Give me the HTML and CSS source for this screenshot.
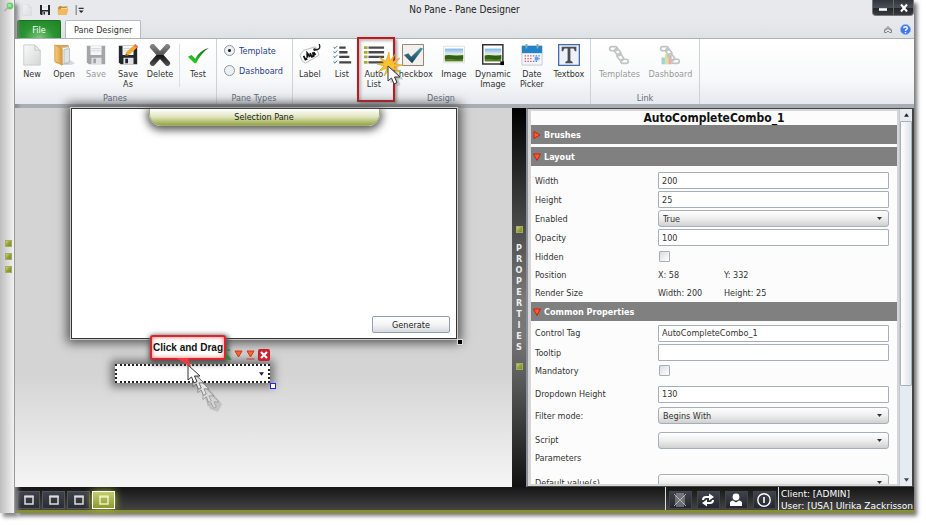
FILE: index.html
```html
<!DOCTYPE html>
<html lang="en">
<head>
<meta charset="utf-8">
<title>No Pane - Pane Designer</title>
<link rel="stylesheet" href="styles.css">
</head>
<body>
<svg class="defs" aria-hidden="true">
  <defs>
    <linearGradient id="gPaper" x1="0" y1="0" x2="1" y2="1"><stop offset="0" stop-color="#fafafa"/><stop offset="1" stop-color="#d4d6d6"/></linearGradient>
    <linearGradient id="gSky" x1="0" y1="0" x2="0" y2="1"><stop offset="0" stop-color="#7fb6e8"/><stop offset=".45" stop-color="#e8f2ee"/><stop offset=".55" stop-color="#87a93c"/><stop offset="1" stop-color="#4e7a1c"/></linearGradient>
    <linearGradient id="gX" gradientUnits="userSpaceOnUse" x1="0" y1="0" x2="0" y2="24"><stop offset="0" stop-color="#8a8a8a"/><stop offset=".48" stop-color="#555"/><stop offset=".5" stop-color="#111"/><stop offset="1" stop-color="#555"/></linearGradient>
    <linearGradient id="gFold" x1="0" y1="0" x2="1" y2="0"><stop offset="0" stop-color="#f6cf82"/><stop offset="1" stop-color="#d9993a"/></linearGradient>
    <linearGradient id="gTick" x1="0" y1="1" x2="1" y2="0"><stop offset="0" stop-color="#2fe02a"/><stop offset="1" stop-color="#0a5a12"/></linearGradient>
    <linearGradient id="gTeal" x1="0" y1="0" x2="0" y2="1"><stop offset="0" stop-color="#4a95a5"/><stop offset="1" stop-color="#153f52"/></linearGradient>
    <symbol id="page" viewBox="0 0 22 24"><path d="M2 1h12l6 6v16H2z" fill="url(#gPaper)" stroke="#c9cccd"/><path d="M14 1v6h6z" fill="#e4e6e6" stroke="#c9cccd"/></symbol>
    <symbol id="floppy" viewBox="0 0 24 24"><path d="M2 2h20v20H4l-2-2z" fill="currentColor"/><path d="M6 2h12v10H6z" fill="#f4f6f8"/><path d="M7 5h10M7 7.500h10" stroke="#cdd3d8"/><path d="M7 15h11v7H7z" fill="#dfe2e5"/><path d="M9 16h3v5H9z" fill="currentColor"/></symbol>
    <symbol id="chain" viewBox="0 0 26 24"><g fill="none" stroke="#c2c4c4" stroke-width="2"><rect x="2" y="2" width="9" height="5" rx="2.500"/><rect x="7" y="6" width="9" height="5" rx="2.500" transform="rotate(55 11.500 8.500)"/><rect x="10" y="12" width="9" height="5" rx="2.500" transform="rotate(50 14.500 14.500)"/><rect x="15" y="17" width="9" height="5" rx="2.500"/></g></symbol>
    <symbol id="window" viewBox="0 0 10 10"><path d="M1 1.500h8v7.500H1z" fill="none" stroke="currentColor" stroke-width="1.500"/><path d="M.3 1.500h9.400" stroke="currentColor" stroke-width="2"/></symbol>
    <symbol id="arrow" viewBox="0 0 14 20"><path d="M1 1v15l3.500-3 2.500 6 3-1.500-2.500-5.500H13z" stroke-linejoin="round"/></symbol>
  </defs>
</svg>
<div class="app">
  <aside class="side">
    <svg class="pin" viewBox="0 0 10 10"><circle cx="6" cy="4" r="3.400" fill="#6fc96a"/><circle cx="5.500" cy="3.500" r="1.800" fill="#a4e39c"/><path d="M.5 9l3.500-3.500" stroke="#a9a9a9" stroke-width="1.500"/></svg>
    <i class="dot"></i><i class="dot"></i><i class="dot"></i>
  </aside>
  <main class="window">
    <header class="title-bar">
      <div class="quick">
        <svg class="q-icon faint" viewBox="0 0 22 24"><use href="#page"/></svg>
        <svg class="q-icon dark" viewBox="0 0 24 24"><use href="#floppy"/></svg>
        <svg class="q-icon" viewBox="0 0 22 22"><path d="M2 20V6l4-3 4 2 9-1v8z" fill="#c98a2b"/><path d="M7 8h9l2-2v8H7z" fill="#f7f1e2"/><path d="M1 11l5-2h15l-3 11H2z" fill="#f2b95a"/></svg>
        <svg class="q-menu" viewBox="0 0 10 12"><path d="M1 0v12" stroke="#555"/><path d="M4 4h6" stroke="#222" stroke-width="1.400"/><path d="M4 6.500h6l-3 3z" fill="#222"/></svg>
      </div>
      <h1>No Pane - Pane Designer</h1>
      <div class="win-buttons">
        <button type="button" aria-label="Minimize"><svg viewBox="0 0 10 10"><path d="M1 6.500h8" stroke="#fff" stroke-width="2.600"/></svg></button>
        <button type="button" aria-label="Close"><svg viewBox="0 0 10 10"><path d="M2 1.500l6 7M8 1.500l-6 7" stroke="#fff" stroke-width="2"/></svg></button>
      </div>
    </header>
    <nav class="tabs">
      <button type="button" class="tab file">File</button>
      <button type="button" class="tab current">Pane Designer</button>
      <span class="tab-tools">
        <svg class="tool" viewBox="0 0 10 10"><path d="M1.500 6L5 2.500 8.500 6v2.500H6.500L5 7 3.500 8.500h-2zM1.500 6.500L5 4.500l3.500 2" fill="none" stroke="#777" stroke-width=".9"/></svg>
        <svg class="tool help" viewBox="0 0 12 12"><circle cx="6" cy="6" r="5.500" fill="#3f78e6" stroke="#8eb0f0"/><path d="M4 4.600C4 2.500 8 2.500 8 4.600 8 6 6 5.800 6 7.600M6 8.600v1.400" fill="none" stroke="#fff" stroke-width="1.500"/></svg>
      </span>
    </nav>
    <div class="ribbon">
      <section class="group">
        <div class="items">
          <button type="button" class="cmd"><svg viewBox="0 0 22 24"><use href="#page"/></svg>New</button>
          <button type="button" class="cmd"><svg viewBox="0 0 24 24"><path d="M18 17l6 4-4 2H8z" fill="#d8d8d8"/><path d="M3 1h14v20H3z" fill="#d9a24b"/><path d="M9 4l8-1v18l-8 1z" fill="#f4f6f6" stroke="#b9bdbd"/><path d="M12 6l6-1v15l-6 1z" fill="#dce5e8" stroke="#b9bdbd"/><path d="M2 1l8 4v18l-8-4z" fill="url(#gFold)" stroke="#d39a40"/></svg>Open</button>
          <button type="button" class="cmd" disabled><svg class="grey" viewBox="0 0 24 24"><use href="#floppy"/></svg>Save</button>
          <button type="button" class="cmd"><svg class="dark" viewBox="0 0 24 24"><use href="#floppy"/><path d="M9 13l1-4L20 0l3 3-10 9z" fill="#f3a92d"/><path d="M20 0l3 3-1.500 1.500-3-3z" fill="#ef6a6a"/><path d="M9 13l.7-2.500 1.800 1.500z" fill="#333"/></svg>Save<br>As</button>
          <button type="button" class="cmd"><svg viewBox="0 0 24 24"><path d="M4 3l16 18M20 3L4 21" stroke="url(#gX)" stroke-width="6" stroke-linecap="round"/></svg>Delete</button>
          <span class="rule"></span>
          <button type="button" class="cmd"><svg viewBox="0 0 24 24"><path d="M1 14l4-2 4 4C12 10 17 6 24 4 18 8 13 14 10 21H8z" fill="url(#gTick)"/></svg>Test</button>
        </div>
        <h2>Panes</h2>
      </section>
      <section class="group">
        <div class="choices">
          <label><input type="radio" name="kind" checked>Template</label>
          <label><input type="radio" name="kind">Dashboard</label>
        </div>
        <h2>Pane Types</h2>
      </section>
      <section class="group">
        <div class="items">
          <button type="button" class="cmd"><svg viewBox="0 0 24 24"><path d="M1 12l4-5 13-4 4 9-15 9-4-3z" fill="#fff" stroke="#b5b5b5"/><path d="M17 6c4 1 7-1 5-6" fill="none" stroke="#222" stroke-width="1.500"/><circle cx="17" cy="6" r="1.500" fill="#222"/><path d="M5 13l2 4 2-1M9 15l0-5 3 4M12 10l2 4 2-1-1-4M16 9l2 3" fill="none" stroke="#111" stroke-width="2"/></svg>Label</button>
          <button type="button" class="cmd"><svg viewBox="0 0 24 24"><path d="M9 4h7M9 9h9M9 14h11M9 20h13" stroke="#444" stroke-width="2.500"/><path d="M3 3l1 2 3-3M3 8l1 2 3-3M3 13l1 2 3-3M3 19l1 2 3-3" fill="none" stroke="#3d7a84" stroke-width="1"/></svg>List</button>
          <button type="button" class="cmd"><svg viewBox="0 0 24 24"><path d="M6 4h17M6 9h17M6 14h17M6 20h17" stroke="#4a4a4a" stroke-width="2.500"/><path d="M1 4h4M1 9h4M1 14h4M1 20h4" stroke="#9cae3c" stroke-width="3"/></svg>Auto<br>List</button>
          <button type="button" class="cmd w46"><svg viewBox="0 0 24 24"><path d="M.5.500h23v23H.5z" fill="#f3efec" stroke="#8a7669"/><path d="M2 12l5-2 3 4 10-10 3 1-12 16z" fill="url(#gTeal)"/></svg>Checkbox</button>
          <button type="button" class="cmd w36"><svg viewBox="0 0 24 24"><path d="M.5 2.500h23v18H.5z" fill="#fff" stroke="#ddd"/><path d="M2 5h20v14H2z" fill="url(#gSky)"/><path d="M2 13c6-3 9 2 20-1v4c-8 3-12-1-20 1z" fill="#335f1c"/></svg>Image</button>
          <button type="button" class="cmd w42"><svg viewBox="0 0 24 24"><path d="M.8.800h22v21H.8z" fill="#fff" stroke="#333" stroke-width="1.600"/><path d="M3 5h18v14H3z" fill="url(#gSky)"/><path d="M3 13c6-3 9 2 18-1v4c-8 3-11-1-18 1z" fill="#335f1c"/><path d="M20 19h4v4h-4z" fill="#000"/></svg>Dynamic<br>Image</button>
          <button type="button" class="cmd w36"><svg viewBox="0 0 24 24"><path d="M1 2h22v21H1z" fill="#f3f5f9" stroke="#c4cad4"/><path d="M1 2h22v8H1z" fill="#2383c6"/><path d="M6 0v5M18 0v5" stroke="#8aa" stroke-width="2"/><path d="M4 13h8M4 16h8M4 19h8" stroke="#dc5560" stroke-width="1.500" stroke-dasharray="1.500 1.500"/><path d="M13 13h8M16 16h5M13 19h5" stroke="#5c80bd" stroke-width="1.500" stroke-dasharray="1.500 1.500"/><path d="M15 14h4v4h-4z" fill="#6e9bea"/></svg>Date<br>Picker</button>
          <button type="button" class="cmd w38"><svg viewBox="0 0 24 24"><path d="M.7.700h22.600v22.600H.7z" fill="#edf1f8" stroke="#4468b0" stroke-width="1.400"/><path d="M4 3h16v5h-1.500L17 5h-3.500v13l2.500 1.500V21H8v-1.500l2.500-1.500V5H7L5.500 8H4z" fill="#4c4e52"/></svg>Textbox</button>
        </div>
        <h2>Design</h2>
      </section>
      <section class="group link">
        <div class="items">
          <button type="button" class="cmd w51" disabled><svg viewBox="0 0 26 24"><use href="#chain"/></svg>Templates</button>
          <button type="button" class="cmd w51" disabled><svg viewBox="0 0 26 24"><path d="M3 15h4v8H3z" fill="#9fd0df"/><path d="M7 11h4v12H7z" fill="#dedf9a"/><path d="M11 13h4v10h-4z" fill="#eeaba0"/><use href="#chain"/></svg>Dashboard</button>
        </div>
        <h2>Link</h2>
      </section>
      <div class="callout-box"></div>
      <svg class="burst" viewBox="0 0 30 40"><path d="M12 0l1 9 5-7-3 8 8-4-6 6 9 1-9 2 6 5-8-3 0 8-3-7-5 6 3-8-9 4 6-6-7-2 7-1-5-6 7 4z" fill="#f8c232" stroke="#e09c10" stroke-width=".6"/><use href="#arrow" x="13" y="15" width="14" height="20" fill="#aaa" stroke="#aaa" opacity=".5"/><use href="#arrow" x="10" y="13" width="14" height="20" fill="#fff" stroke="#333"/></svg>
    </div>
    <div class="work">
      <div class="canvas">
        <div class="pane">
          <div class="pane-title">Selection Pane</div>
          <button type="button" class="generate">Generate</button>
        </div>
        <i class="grip"></i>
        <div class="combo"><svg viewBox="0 0 6 4"><path d="M0 0h6L3 4z" fill="#222"/></svg></div>
        <i class="resize"></i>
        <svg class="tail" viewBox="0 0 40 52"><path d="M1 0l34 40-4 8-8-3z" fill="#888" opacity=".3"/><g fill="#e6e6e6" stroke="#888"><use href="#arrow" x="20" y="26" width="13" height="20" opacity=".5"/><use href="#arrow" x="15" y="20" width="13" height="20" opacity=".7"/><use href="#arrow" x="10" y="13" width="13" height="20"/><use href="#arrow" x="5" y="7" width="13" height="20" stroke="#666"/></g><use href="#arrow" x="0" y="0" width="14" height="20" fill="#fff" stroke="#333"/></svg>
        <div class="tip">Click and Drag<svg viewBox="0 0 16 10"><path d="M0 0h12l3 9z" fill="#ee3a40"/></svg></div>
        <svg class="marks" viewBox="0 0 44 14"><path d="M0 2h4M0 11h4M0 6l4 5H0z" fill="#2b8a2e" stroke="#2b8a2e" stroke-width="1.500"/><path d="M9 3h7l-3.500 6z" fill="#f26a24" stroke="#d3331f"/><path d="M21 3h7l-3.500 6zM20.500 11h8" fill="#f26a24" stroke="#d3331f"/><rect x="32" y="1" width="12" height="12" rx="2" fill="#c9222e"/><path d="M35 4l6 6M41 4l-6 6" stroke="#fff" stroke-width="2.200"/></svg>
      </div>
      <div class="handle"><i class="dot"></i><span>PROPERTIES</span><i class="dot"></i></div>
      <form class="props">
        <div class="sheet">
          <h2>AutoCompleteCombo_1</h2>
          <h3><svg viewBox="0 0 8 8"><path d="M1 .500l6 3.500-6 3.500z"/></svg>Brushes</h3>
          <h3 class="second"><svg viewBox="0 0 8 8"><path d="M.5 1h7L4 7.500z"/></svg>Layout</h3>
          <div class="fields layout">
            <label for="w">Width</label><input type="text" id="w" value="200">
            <label for="h">Height</label><input type="text" id="h" value="25">
            <label for="en">Enabled</label><select id="en"><option>True</option><option>False</option></select>
            <label for="op">Opacity</label><input type="text" id="op" value="100">
            <label for="hid">Hidden</label><input type="checkbox" id="hid">
            <span>Position</span><span class="pair"><b>X: 58</b><b>Y: 332</b></span>
            <span>Render Size</span><span class="pair"><b>Width: 200</b><b>Height: 25</b></span>
          </div>
          <h3><svg viewBox="0 0 8 8"><path d="M.5 1h7L4 7.500z"/></svg>Common Properties</h3>
          <div class="fields common">
            <label for="ct">Control Tag</label><input type="text" id="ct" value="AutoCompleteCombo_1">
            <label for="tt">Tooltip</label><input type="text" id="tt">
            <label for="man">Mandatory</label><input type="checkbox" id="man">
            <label for="dh">Dropdown Height</label><input type="text" id="dh" value="130">
            <label for="fm">Filter mode:</label><select id="fm"><option>Begins With</option></select>
            <label for="sc">Script</label><select id="sc"><option></option></select>
            <span>Parameters</span><span></span>
            <label for="dv">Default value(s)</label><select id="dv"><option></option></select>
          </div>
        </div>
        <div class="scroll">
          <svg viewBox="0 0 6 4"><path d="M0 4h6L3 0z" fill="#222"/></svg>
          <div class="thumb"></div><div class="track"></div>
          <svg viewBox="0 0 6 4"><path d="M0 0h6L3 4z" fill="#444"/></svg>
        </div>
      </form>
    </div>
    <footer class="status">
      <div class="screens">
        <button type="button" aria-label="Screen 1"><svg viewBox="0 0 10 10"><use href="#window"/></svg></button>
        <button type="button" aria-label="Screen 2"><svg viewBox="0 0 10 10"><use href="#window"/></svg></button>
        <button type="button" aria-label="Screen 3"><svg viewBox="0 0 10 10"><use href="#window"/></svg></button>
        <button type="button" aria-label="Screen 4" class="on"><svg viewBox="0 0 10 10"><use href="#window"/></svg></button>
      </div>
      <div class="session">
        <button type="button" aria-label="Full screen"><svg viewBox="0 0 14 14"><path d="M3 3h8v8H3zM5 5h4v4H5zM1 1l12 12M13 1L1 13M3 1h8M3 13h8" fill="none" stroke="#ccc" stroke-width=".8"/></svg></button>
        <button type="button" aria-label="Refresh"><svg viewBox="0 0 14 14"><path d="M2 7q0-3 3-3h4M12 7q0 3-3 3H5" fill="none" stroke="#fff" stroke-width="2"/><path d="M8 .500L13 4 8 7.500zM6 6.500L1 10l5 3.500z" fill="#fff"/></svg></button>
        <button type="button" aria-label="User"><svg viewBox="0 0 14 14"><circle cx="7" cy="4" r="3.400" fill="#fff"/><path d="M1 13V10q0-2 3-2.500l3 2 3-2q3 .500 3 2.500v3z" fill="#fff"/></svg></button>
        <button type="button" aria-label="Power"><svg viewBox="0 0 14 14"><circle cx="7" cy="7" r="6.200" fill="none" stroke="#fff" stroke-width="1.400"/><path d="M7 4v6" stroke="#fff" stroke-width="1.600"/></svg></button>
      </div>
      <p>Client: [ADMIN]<br>User: [USA] Ulrika Zackrisson</p>
    </footer>
  </main>
</div>
</body>
</html>
```
FILE: styles.css
```css
* { box-sizing: border-box; }
body { margin: 0; background: #fff; color: #222; font: 9px/10px "DejaVu Sans Condensed", "DejaVu Sans", sans-serif; }
button, input, select { font: inherit; color: inherit; margin: 0; padding: 0; }
h1, h2, h3, p { margin: 0; font: inherit; }
svg { display: block; }
.defs { position: absolute; width: 0; height: 0; }

.app { display: flex; height: 100vh; padding: 0 12px 12px 0; }
.side { width: 15px; flex: none; display: flex; flex-direction: column; align-items: flex-end; justify-content: center; gap: 6px; padding-right: 2px; position: relative; background: linear-gradient(90deg, #bdbdbd, #f2f2f2); border-right: 1px solid #999; box-shadow: 3px 4px 4px #888; }
.pin { position: absolute; top: 2px; left: 4px; width: 10px; height: 10px; }
.dot { width: 7px; height: 7px; background: linear-gradient(135deg, #c9d485, #94a235 50%, #7d8b20); border: 1px solid #a3ad62; }
.window { flex: 1; min-width: 0; display: flex; flex-direction: column; box-shadow: 3px 3px 4px #777; }

.title-bar { height: 20px; display: grid; grid-template-columns: 1fr auto 1fr; background: #e7e9ec; }
.title-bar h1 { font-size: 10px; line-height: 20px; }
.quick { display: flex; align-items: center; gap: 6px; padding-left: 6px; }
.q-icon { width: 12px; height: 12px; }
.faint { opacity: .6; }
.dark { color: #23272c; }
.grey { color: #a3a5a7; }
.q-menu { width: 9px; height: 10px; }
.win-buttons { display: flex; justify-self: end; height: 16px; background: linear-gradient(#30343b, #4a4e56 50%, #25272c 55%, #383b41); border: 1px solid #77787a; border-top: 0; border-radius: 0 0 4px 4px; }
.win-buttons button { width: 20px; background: none; border: 0; }
.win-buttons button + button { border-left: 1px solid #666; }
.win-buttons svg { width: 10px; height: 10px; margin: auto; }

.tabs { height: 19px; display: flex; align-items: flex-end; gap: 4px; padding: 0 3px 0 2px; background: linear-gradient(#e7e9ec, #dfe2e5); border-bottom: 1px solid #a9b3b8; }
.tab { height: 18px; border: 1px solid #b4bbc3; border-bottom: 0; border-radius: 2px 2px 0 0; padding: 0 8px; }
.file { width: 44px; padding: 0; color: #fff; background: radial-gradient(ellipse at 50% 100%, #7cc87a, #2c9433 50%, #1d8226); border-color: #1c6e25; }
.current { background: #fff; color: #333; }
.tab-tools { flex: 1; display: flex; justify-content: flex-end; align-items: center; gap: 7px; height: 18px; }
.tool { width: 10px; height: 10px; }
.help { width: 11px; height: 11px; }

.ribbon { position: relative; height: 65px; display: flex; background: linear-gradient(#fff, #f8f9fa 60%, #e6e9ee); }
.group { display: flex; flex-direction: column; justify-content: space-between; padding: 5px 2px 1px 1px; border-right: 1px solid #ccd2d7; }
.link { padding: 5px 3px 1px; }
.group h2 { text-align: center; color: #5e6a79; }
.items { display: flex; }
.cmd { width: 32px; display: flex; flex-direction: column; align-items: center; gap: 3px; background: none; border: 0; color: #333; white-space: nowrap; line-height: 10px; text-align: center; justify-content: flex-start; }
.cmd:disabled { color: #999; }
.cmd svg { width: 22px; height: 22px; }
.w36 { width: 36px; } .w38 { width: 38px; } .w42 { width: 42px; } .w46 { width: 46px; } .w51 { width: 51px; }
.rule { width: 1px; height: 43px; margin: 0 2px 0 3px; background: #dcdfe2; }
.choices { display: flex; flex-direction: column; gap: 9px; padding: 1px 7px 0 6px; color: #1f3f86; }
.choices label { display: flex; align-items: center; gap: 4px; height: 11px; }
.choices input { appearance: none; width: 11px; height: 11px; border: 1px solid #8b98a5; border-radius: 50%; background: #eef0f2; }
.choices input:checked { background: radial-gradient(circle, #222 0 1px, #eef0f2 2px); }
.callout-box { position: absolute; left: 342px; top: -2px; width: 38px; height: 65px; border: 2px solid #c4161c; box-shadow: 2px 2px 3px #999, inset 2px 2px 3px #bbb; }
.burst { position: absolute; left: 362px; top: 13px; width: 30px; height: 40px; }

.work { flex: 1; min-height: 0; display: flex; border-top: 4px solid #a9adb6; }
.canvas { position: relative; flex: 1; background: linear-gradient(#d4d4d4 70%, #f6f5f6); }
.pane { position: absolute; left: 56px; top: 0; width: 386px; height: 231px; background: #fff; border: 1px solid #333; box-shadow: 0 0 0 1px #ccc, 0 0 10px 4px #555; }
.pane-title { width: 231px; height: 17px; margin: 0 auto; line-height: 17px; text-align: center; background: linear-gradient(#fff, #dfe4bd 50%, #96a641); border: 1px solid #a4ab7a; border-top: 0; border-radius: 0 0 12px 12px; box-shadow: 0 2px 8px 2px #555; }
.generate { position: absolute; right: 6px; bottom: 5px; width: 78px; height: 17px; border: 1px solid #8fa1b1; border-radius: 2px; background: linear-gradient(#fff, #f4f5f6 50%, #d5dade); }
.grip { position: absolute; left: 443px; top: 232px; width: 4px; height: 4px; background: #000; outline: 1px solid #ddd; }
.combo { position: absolute; left: 100px; top: 256px; width: 155px; height: 19px; border: 2px dotted #222; background: #fff; box-shadow: 0 0 9px 4px #777; display: flex; align-items: center; justify-content: flex-end; padding-right: 4px; }
.combo svg { width: 5px; height: 4px; }
.marks { position: absolute; left: 211px; top: 240px; width: 44px; height: 14px; }
.resize { position: absolute; left: 255px; top: 275px; width: 6px; height: 6px; background: #fff; border: 1px solid #22f; }
.tip { position: absolute; left: 135px; top: 227px; width: 76px; height: 25px; line-height: 21px; text-align: center; white-space: nowrap; color: #111; font-family: "Liberation Sans", sans-serif; font-weight: bold; font-size: 10px; background: #fff; border: 2px solid #d8262d; border-radius: 3px; box-shadow: 1px 2px 5px 2px #555, inset 0 0 4px #f66; }
.tip svg { position: absolute; left: 24px; top: 21px; width: 16px; height: 10px; }
.tail { position: absolute; left: 172px; top: 256px; width: 40px; height: 52px; }

.handle { width: 14px; display: flex; flex-direction: column; align-items: center; justify-content: center; gap: 10px; background: linear-gradient(#000, #777 50%, #777 60%, #111); color: #eee; font-weight: bold; }
.handle span { width: 8px; line-height: 11px; text-align: center; word-break: break-all; }
.props { width: 388px; display: flex; background: #d6d6d6; border: 1px solid #444; border-left: 2px solid #8a8f9a; border-right-width: 2px; }
.sheet { flex: 1; min-width: 0; margin: 2px 2px 2px 3px; overflow: hidden; background: #fcfcfc; }
.sheet h2 { font-size: 12px; line-height: 14px; font-weight: bold; text-align: center; color: #111; }
.sheet h3 { display: flex; align-items: center; gap: 3px; height: 19px; padding-left: 2px; background: #808080; color: #fff; font-weight: bold; }
.sheet h3 svg { width: 8px; height: 8px; fill: #ff5a2c; stroke: #c8200e; }
.sheet .second { margin-top: 3px; }
.fields { display: grid; grid-template-columns: 123px 1fr; align-items: center; padding: 0 8px 0 4px; color: #333; }
.layout { grid-template-rows: repeat(5, 19px) 18px 18px; padding-top: 5px; }
.common { grid-template-rows: 20px 19px 17px 30px 13px 36px 0 49px; padding-top: 2px; }
.fields input, .fields select { width: 100%; height: 17px; border: 1px solid #a4afb9; border-radius: 1px; background-color: #fff; padding: 0 3px; }
.fields select { appearance: none; border-radius: 3px; padding: 0 4px; background: url("data:image/svg+xml,%3Csvg xmlns='http://www.w3.org/2000/svg' width='5' height='3'%3E%3Cpath d='M0 0h5L2.5 3z' fill='%23333'/%3E%3C/svg%3E") right 6px center no-repeat, linear-gradient(#fff, #eee 50%, #d0d0d0); }
.fields input[type="checkbox"] { appearance: none; width: 11px; height: 11px; margin-left: 1px; background: linear-gradient(135deg, #ddd, #fff); }
.pair { display: grid; grid-template-columns: 66px 1fr; }
.pair b { font-weight: normal; }
.scroll { width: 13px; display: flex; flex-direction: column; align-items: center; background: #e6ebf1; border-left: 1px solid #c2c8cf; }
.scroll svg { width: 5px; height: 4px; margin: 4px 0; }
.thumb { flex: 3; width: 100%; border: 1px solid #a5b0bb; border-radius: 1px; background: linear-gradient(90deg, #fff, #dfe3e8); }
.track { flex: 1; }

.status { height: 26px; display: flex; background: linear-gradient(#151515, #444); border-bottom: 3px solid #87902f; color: #fff; }
.screens { flex: 1; display: flex; gap: 2px; padding: 4px 2px 1px; }
.screens button { width: 23px; color: #ddd; border: 1px solid #555; background: linear-gradient(#3d424d, #2b2d33); }
.screens button svg { width: 10px; height: 10px; margin: auto; }
.screens .on { color: #eef0c0; border: 1px solid #fff; background: linear-gradient(#c3cd72, #8c9930); box-shadow: 0 0 8px #aab83a; }
.session { display: flex; gap: 5px; padding: 4px 2px 1px 3px; border: solid #ddd; border-width: 0 1px; }
.session button { width: 23px; border: 1px solid #444; background: linear-gradient(#3d424d, #25272c); }
.session svg { width: 14px; height: 14px; margin: auto; }
.status p { padding: 1px 1px 0 2px; font-family: "DejaVu Sans", sans-serif; line-height: 12px; white-space: nowrap; }
```
